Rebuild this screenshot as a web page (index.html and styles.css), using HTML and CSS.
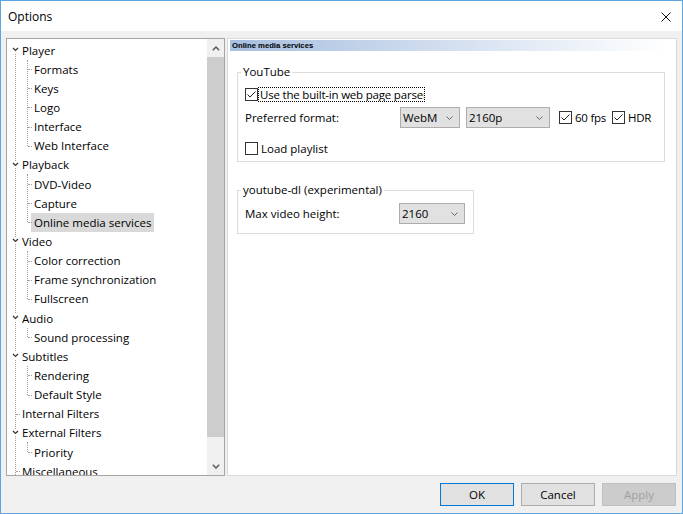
FILE: index.html
```html
<!DOCTYPE html>
<html lang="en">
<head>
<meta charset="utf-8">
<title>Options</title>
<link rel="stylesheet" href="styles.css">
</head>
<body>
<div class="window">
  <div class="titlebar">
    <span class="title">Options</span>
    <svg class="close" width="10" height="10" viewBox="0 0 10 10"><path d="M0.5 0.5 L9.5 9.5 M9.5 0.5 L0.5 9.5" stroke="#111" stroke-width="1" fill="none"/></svg>
  </div>
  <div class="content">
    <div class="main">
      <div class="treeframe">
        <div class="tree">
          <div class="node">
            <div class="row root"><span class="exp"><svg width="7" height="5" viewBox="0 0 7 5"><polyline points="1,1 3.5,3.5 6,1" fill="none" stroke="#333" stroke-width="1.2"/></svg></span><span class="lbl">Player</span></div>
            <div class="kids">
              <div class="row kid"><span class="lbl">Formats</span></div>
              <div class="row kid"><span class="lbl">Keys</span></div>
              <div class="row kid"><span class="lbl">Logo</span></div>
              <div class="row kid"><span class="lbl">Interface</span></div>
              <div class="row kid"><span class="lbl">Web Interface</span></div>
            </div>
          </div>
          <div class="node">
            <div class="row root"><span class="exp"><svg width="7" height="5" viewBox="0 0 7 5"><polyline points="1,1 3.5,3.5 6,1" fill="none" stroke="#333" stroke-width="1.2"/></svg></span><span class="lbl">Playback</span></div>
            <div class="kids">
              <div class="row kid"><span class="lbl">DVD-Video</span></div>
              <div class="row kid"><span class="lbl">Capture</span></div>
              <div class="row kid sel"><span class="lbl">Online media services</span></div>
            </div>
          </div>
          <div class="node">
            <div class="row root"><span class="exp"><svg width="7" height="5" viewBox="0 0 7 5"><polyline points="1,1 3.5,3.5 6,1" fill="none" stroke="#333" stroke-width="1.2"/></svg></span><span class="lbl">Video</span></div>
            <div class="kids">
              <div class="row kid"><span class="lbl">Color correction</span></div>
              <div class="row kid"><span class="lbl">Frame synchronization</span></div>
              <div class="row kid"><span class="lbl">Fullscreen</span></div>
            </div>
          </div>
          <div class="node">
            <div class="row root"><span class="exp"><svg width="7" height="5" viewBox="0 0 7 5"><polyline points="1,1 3.5,3.5 6,1" fill="none" stroke="#333" stroke-width="1.2"/></svg></span><span class="lbl">Audio</span></div>
            <div class="kids">
              <div class="row kid"><span class="lbl">Sound processing</span></div>
            </div>
          </div>
          <div class="node">
            <div class="row root"><span class="exp"><svg width="7" height="5" viewBox="0 0 7 5"><polyline points="1,1 3.5,3.5 6,1" fill="none" stroke="#333" stroke-width="1.2"/></svg></span><span class="lbl">Subtitles</span></div>
            <div class="kids">
              <div class="row kid"><span class="lbl">Rendering</span></div>
              <div class="row kid"><span class="lbl">Default Style</span></div>
            </div>
          </div>
          <div class="node leaf">
            <div class="row root"><span class="lbl">Internal Filters</span></div>
          </div>
          <div class="node">
            <div class="row root"><span class="exp"><svg width="7" height="5" viewBox="0 0 7 5"><polyline points="1,1 3.5,3.5 6,1" fill="none" stroke="#333" stroke-width="1.2"/></svg></span><span class="lbl">External Filters</span></div>
            <div class="kids">
              <div class="row kid"><span class="lbl">Priority</span></div>
            </div>
          </div>
          <div class="node leaf">
            <div class="row root"><span class="lbl">Miscellaneous</span></div>
          </div>
        </div>
        <div class="scrollbar">
          <div class="sb-btn"><svg width="8" height="5" viewBox="0 0 8 5"><polyline points="0.8,4.2 4,1 7.2,4.2" fill="none" stroke="#555" stroke-width="1.4"/></svg></div>
          <div class="sb-thumb"></div>
          <div class="sb-track"></div>
          <div class="sb-btn"><svg width="8" height="5" viewBox="0 0 8 5"><polyline points="0.8,0.8 4,4 7.2,0.8" fill="none" stroke="#555" stroke-width="1.4"/></svg></div>
        </div>
      </div>
      <div class="page">
        <div class="page-header">Online media services</div>
        <fieldset class="group group-yt">
          <legend>YouTube</legend>
          <div class="frow frow-parser">
            <span class="cb"><svg width="11" height="11" viewBox="0 0 11 11"><polyline points="1.5,5.5 4,8 9.5,2.5" fill="none" stroke="#222" stroke-width="1"/></svg></span><span class="focus-label">Use the built-in web page parser</span>
          </div>
          <div class="frow frow-format">
            <span class="flabel">Preferred format:</span>
            <div class="combo combo-webm"><span>WebM</span><svg class="dd" width="7" height="4" viewBox="0 0 7 4"><polyline points="0.5,0.5 3.5,3.5 6.5,0.5" fill="none" stroke="#666" stroke-width="1"/></svg></div>
            <div class="combo combo-res"><span>2160p</span><svg class="dd" width="7" height="4" viewBox="0 0 7 4"><polyline points="0.5,0.5 3.5,3.5 6.5,0.5" fill="none" stroke="#666" stroke-width="1"/></svg></div>
            <span class="check check-fps"><span class="cb"><svg width="11" height="11" viewBox="0 0 11 11"><polyline points="1.5,5.5 4,8 9.5,2.5" fill="none" stroke="#222" stroke-width="1"/></svg></span><span class="ctext">60 fps</span></span>
            <span class="check check-hdr"><span class="cb"><svg width="11" height="11" viewBox="0 0 11 11"><polyline points="1.5,5.5 4,8 9.5,2.5" fill="none" stroke="#222" stroke-width="1"/></svg></span><span class="ctext">HDR</span></span>
          </div>
          <div class="frow frow-playlist">
            <span class="cb"></span><span class="ctext">Load playlist</span>
          </div>
        </fieldset>
        <fieldset class="group group-dl">
          <legend>youtube-dl (experimental)</legend>
          <div class="frow frow-height">
            <span class="flabel flabel-dl">Max video height:</span>
            <div class="combo combo-height"><span>2160</span><svg class="dd" width="7" height="4" viewBox="0 0 7 4"><polyline points="0.5,0.5 3.5,3.5 6.5,0.5" fill="none" stroke="#666" stroke-width="1"/></svg></div>
          </div>
        </fieldset>
      </div>
    </div>
    <div class="buttons">
      <button class="btn btn-ok">OK</button>
      <button class="btn">Cancel</button>
      <button class="btn btn-disabled">Apply</button>
    </div>
  </div>
</div>
</body>
</html>
```

FILE: styles.css
```css
* { box-sizing: border-box; }
html, body { margin: 0; padding: 0; }
body {
  width: 683px;
  height: 514px;
  overflow: hidden;
  font-family: "Open Sans", "Noto Sans", sans-serif;
  font-size: 11.5px;
  color: #000;
  background: #fff;
}
.window {
  width: 683px;
  height: 514px;
  border: 1px solid #5ea5e0;
  display: flex;
  flex-direction: column;
  background: #f0f0f0;
}
.titlebar {
  flex: none;
  height: 30px;
  background: #fff;
  display: flex;
  align-items: center;
  justify-content: space-between;
  padding: 0 11px 0 7px;
}
.title { font-size: 12px; line-height: 16px; padding-top: 2px; }
.close { display: block; margin-top: 1px; }

.content {
  flex: 1;
  display: flex;
  flex-direction: column;
  padding: 7px 5px 7px 5px;
}
.main { height: 438px; display: flex; gap: 2px; }

/* tree */
.treeframe {
  width: 219px;
  border: 1px solid #a5a5a5;
  background: #fff;
  display: flex;
}
.tree {
  flex: 1;
  position: relative;
  overflow: hidden;
  padding-top: 1.5px;
}
.tree::before {
  content: "";
  position: absolute;
  left: 8px;
  top: 12px;
  bottom: 0;
  border-left: 1px dotted #a0a0a0;
}
.row {
  position: relative;
  height: 19.15px;
  display: flex;
  align-items: center;
  white-space: nowrap;
}
.root { padding-left: 12px; }
.kid { padding-left: 24px; }
.lbl {
  display: block;
  line-height: 19px;
  height: 19px;
  padding: 0 3px;
}
.sel .lbl { background: #d9d9d9; }
.exp {
  position: absolute;
  left: 4px;
  top: 5.5px;
  width: 9px;
  height: 7px;
  background: #fff;
  display: flex;
  align-items: center;
  justify-content: center;
}
.exp svg { display: block; }
.leaf .row::before {
  content: "";
  position: absolute;
  left: 9px;
  width: 4px;
  top: 50%;
  border-top: 1px dotted #a0a0a0;
}
.kids { position: relative; }
.kids::before {
  content: "";
  position: absolute;
  left: 20px;
  top: 0;
  bottom: 9.6px;
  border-left: 1px dotted #a0a0a0;
}
.kid::before {
  content: "";
  position: absolute;
  left: 21px;
  width: 4px;
  top: 50%;
  border-top: 1px dotted #a0a0a0;
}

/* scrollbar */
.scrollbar {
  width: 17px;
  flex: none;
  display: flex;
  flex-direction: column;
  background: #f0f0f0;
}
.sb-btn {
  height: 18px;
  flex: none;
  display: flex;
  align-items: center;
  justify-content: center;
}
.sb-btn svg { display: block; }
.sb-thumb { height: 380px; flex: none; background: #cdcdcd; }
.sb-track { flex: 1; }

/* page */
.page {
  flex: 1;
  border: 1px solid #dadada;
  background: #fff;
  padding: 1px;
}
.page-header {
  height: 11px;
  line-height: 11px;
  margin-left: 1px;
  padding-left: 2px;
  font-family: "Liberation Sans", Arial, sans-serif;
  font-weight: bold;
  font-size: 7.7px;
  background: linear-gradient(to right, #a7bfe0, #ffffff 98%);
}

.group {
  margin: 0;
  border: 1px solid #dcdcdc;
  min-width: 0;
}
.group legend {
  margin-left: -4px;
  padding: 0 2px;
  line-height: 16px;
}
.group-yt {
  margin: 13px 10px 0 8px;
  padding: 6px 7px 5px 7px;
}
.group-dl {
  width: 237px;
  margin: 20px 0 0 8px;
  padding: 5px 7px 9px 7px;
}
.frow { display: flex; align-items: center; white-space: nowrap; }
.frow-parser { height: 16px; }
.frow-format { height: 21px; margin-top: 5px; }
.frow-playlist { height: 16px; margin-top: 12px; }
.frow-height { height: 21px; }

.cb {
  width: 13px;
  height: 13px;
  flex: none;
  border: 1px solid #333;
  background: #fff;
  display: block;
}
.cb svg { display: block; }
.ctext { margin-left: 3px; }
.check-fps .ctext, .check-hdr .ctext { letter-spacing: -0.25px; }
.focus-label {
  width: 167px;
  height: 15px;
  line-height: 13px;
  overflow: hidden;
  border: 1px dotted #000;
  padding-left: 1px;
  letter-spacing: -0.2px;
}
.flabel { width: 155px; flex: none; }
.flabel-dl { width: 154px; }

.combo {
  height: 21px;
  border: 1px solid #adadad;
  background: #e1e1e1;
  display: flex;
  align-items: center;
  justify-content: space-between;
  padding: 0 6px 0 2px;
  flex: none;
}
.combo .dd { display: block; }
.combo-webm { width: 60px; }
.combo-res { width: 84px; margin-left: 6px; }
.combo-height { width: 66px; }
.check { display: flex; align-items: center; }
.check-fps { margin-left: 9px; }
.check-hdr { margin-left: 6px; }

/* buttons */
.buttons {
  display: flex;
  justify-content: flex-end;
  gap: 7px;
  margin-top: 7px;
  padding-right: 1px;
}
.btn {
  width: 74px;
  height: 23px;
  margin: 0;
  padding: 0;
  border: 1px solid #adadad;
  background: #e1e1e1;
  font-family: inherit;
  font-size: 11.5px;
  color: #000;
}
.btn-ok { border-color: #0078d7; }
.btn-disabled { color: #a0a0a0; background: #cccccc; border-color: #bfbfbf; }
```
